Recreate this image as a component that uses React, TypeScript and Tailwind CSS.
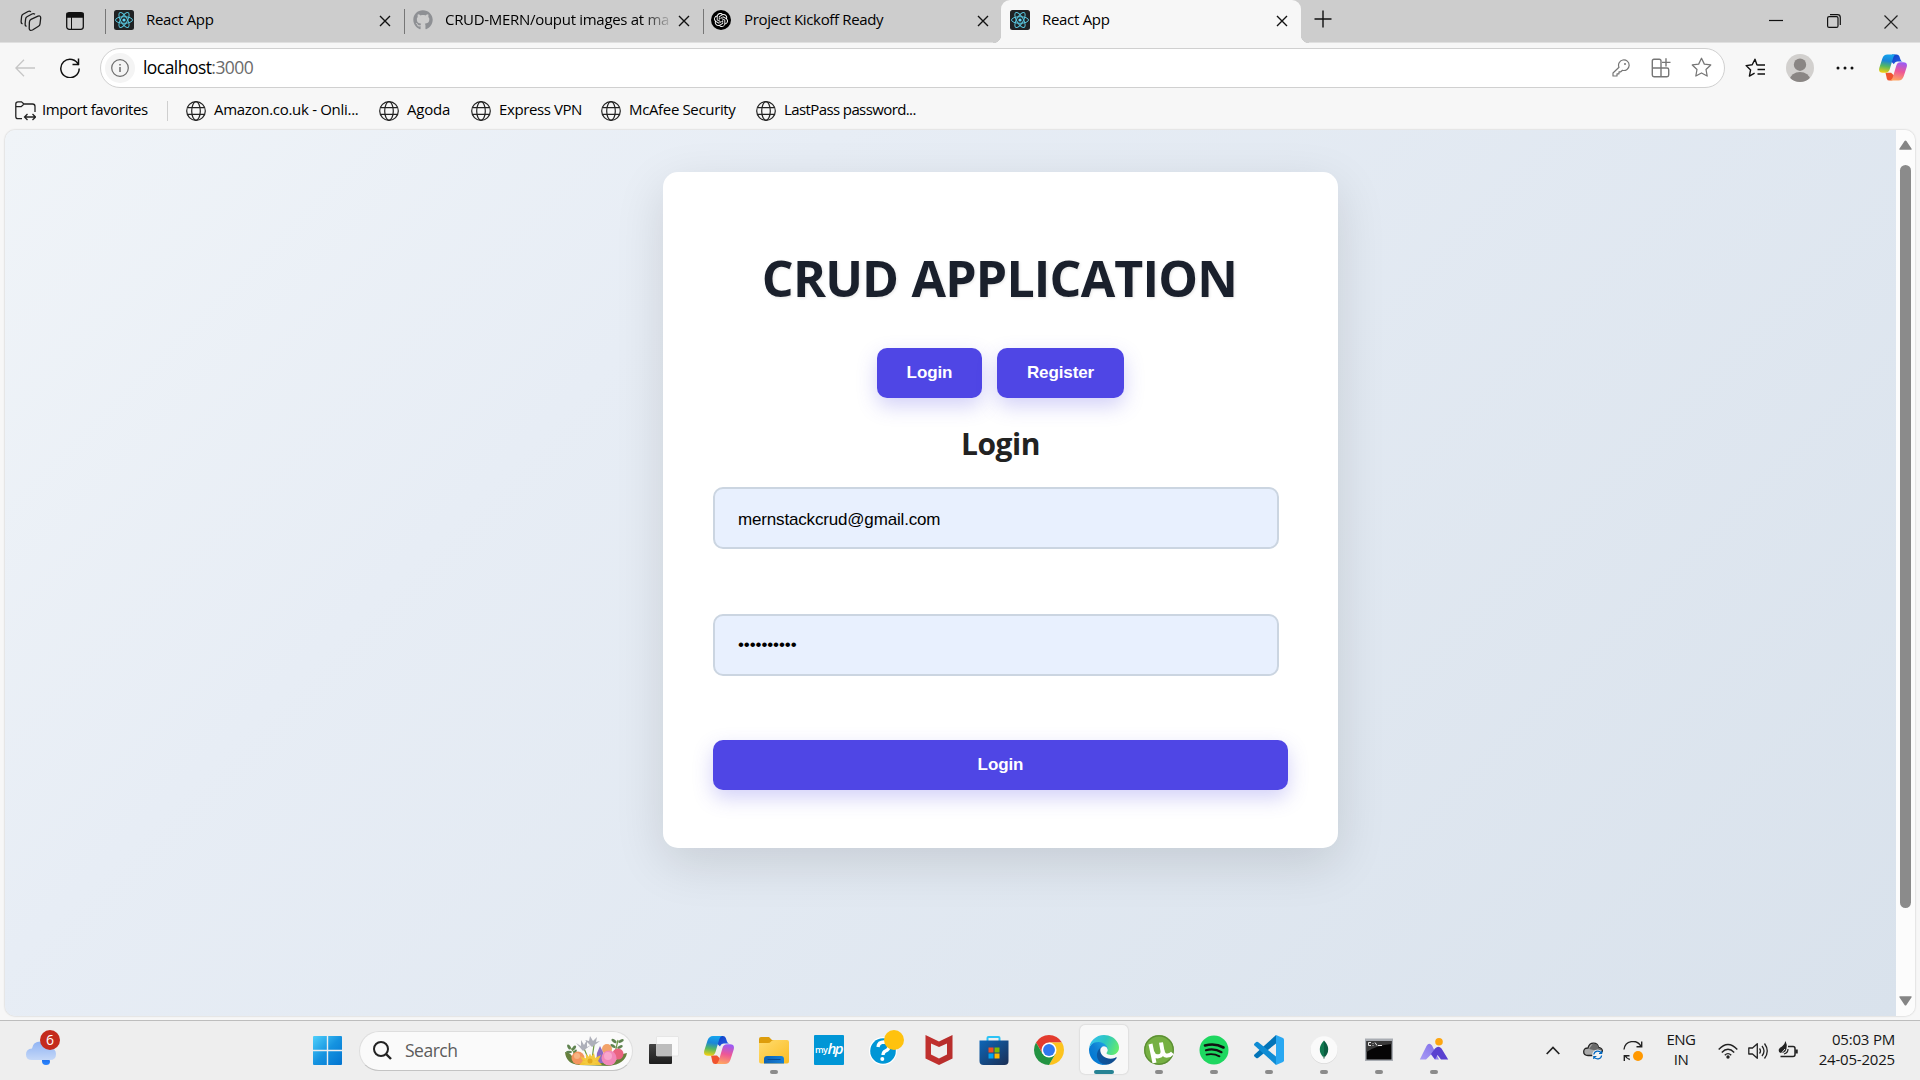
import React from "react";
import { FaGithub } from "react-icons/fa";
import { SiOpenai } from "react-icons/si";

const ui = "font-['Open_Sans','Noto_Sans',sans-serif]";

function ReactFavicon() {
  return (
    <svg viewBox="0 0 20 20" className="size-5 shrink-0">
      <rect width="20" height="20" rx="2.5" fill="#202224" />
      <g fill="none" stroke="#58c4dc" strokeWidth="1">
        <ellipse cx="10" cy="10" rx="8.5" ry="3.3" />
        <ellipse cx="10" cy="10" rx="8.5" ry="3.3" transform="rotate(60 10 10)" />
        <ellipse cx="10" cy="10" rx="8.5" ry="3.3" transform="rotate(120 10 10)" />
      </g>
      <circle cx="10" cy="10" r="1.6" fill="#61dafb" />
    </svg>
  );
}

function CloseIcon() {
  return (
    <svg viewBox="0 0 12 12" className="size-3 shrink-0" fill="none" stroke="#111" strokeWidth="1.4">
      <path d="M1 1l10 10M11 1L1 11" />
    </svg>
  );
}

function Tab({ icon, title, titleClass }: { icon: React.ReactNode; title: string; titleClass: string }) {
  return (
    <div className="flex h-[42px] w-[299px] shrink-0 items-center">
      <div className="mt-px h-[25px] w-px bg-[#767676]" />
      <div className="ml-2 flex w-5 -mt-0.5">{icon}</div>
      <div className={`ml-3 w-[224px] whitespace-nowrap text-[15px] leading-5 -mt-1 ${titleClass}`}>{title}</div>
      <div className="ml-[9px]">
        <CloseIcon />
      </div>
    </div>
  );
}

function TabBar() {
  return (
    <div className="flex h-[43px] items-center border-b border-[#e0e0e0] bg-[#cdcdcd]">
      <svg viewBox="0 0 22 22" className="ml-[20px] size-[22px]" fill="none" stroke="#1c1c1c" strokeWidth="1.3" strokeLinejoin="round">
        <path d="M2.500 14Q.9 13.300 1.100 11.500L1.600 6.500Q1.800 5 3 4.300L8 1.500Q9.500 .8 11 1.800" />
        <path d="M6.500 16.500Q4.900 15.800 5.100 14L5.600 9Q5.800 7.500 7 6.800L12 4Q13.500 3.300 15 4.300" />
        <path d="M11 9.300 18 6.200Q20.800 5.300 20.700 8L20 14Q19.800 15.600 18.500 16.300L12.500 20Q9.500 21.300 9.200 18.500L9.400 12Q9.600 10 11 9.300Z" />
      </svg>
      <svg viewBox="0 0 18 18" className="ml-6 size-[18px]" fill="none" stroke="#111" strokeWidth="1.3">
        <rect x=".7" y=".7" width="16.6" height="16.6" rx="2.5" />
        <path d="M1 1.500h16V5H1z" fill="#111" />
        <path d="M5.500 5v12" strokeWidth="1" />
      </svg>
      <div className="ml-[21px] flex">
        <Tab icon={<ReactFavicon />} title="React App" titleClass="tracking-[-0.3px]" />
        <Tab
          icon={<FaGithub size={20} color="#8e9094" />}
          title="CRUD-MERN/ouput images at ma"
          titleClass="tracking-[-0.3px] [mask-image:linear-gradient(to_right,black_88%,transparent_102%)]"
        />
        <Tab
          icon={
            <div className="flex size-5 -translate-x-px items-center justify-center rounded-full bg-black">
              <SiOpenai size={14} color="#fff" />
            </div>
          }
          title="Project Kickoff Ready"
          titleClass="tracking-[-0.35px]"
        />
      </div>
      <div className="relative -ml-px flex h-[43px] w-[300px] items-center rounded-t-[9px] bg-[#f7f7f7] -mb-px before:absolute before:bottom-0 before:-left-2 before:size-2 before:bg-[radial-gradient(circle_at_0_0,#cdcdcd_8px,#f7f7f7_8.5px)] after:absolute after:bottom-0 after:-right-2 after:size-2 after:bg-[radial-gradient(circle_at_100%_0,#cdcdcd_8px,#f7f7f7_8.5px)]">
        <div className="ml-[9px] -mt-[3px] flex">
          <ReactFavicon />
        </div>
        <div className="ml-3 -mt-[5px] w-[223px] text-[15px] leading-5 tracking-[-0.3px]">React App</div>
        <div className="ml-[11px] flex -mt-px">
          <CloseIcon />
        </div>
      </div>
      <svg viewBox="0 0 18 18" className="ml-[13px] size-[18px] -mt-1" stroke="#111" strokeWidth="1.4">
        <path d="M9 .5v17M.5 9h17" />
      </svg>
      <div className="ml-auto mr-[22px] flex items-center">
        <svg viewBox="0 0 14 14" className="ml-px size-[14px]" stroke="#111" strokeWidth="1.2">
          <path d="M0 6.500h14" />
        </svg>
        <svg viewBox="0 0 14 14" className="ml-[44px] size-[14px]" fill="none" stroke="#111" strokeWidth="1.2">
          <rect x=".6" y="2.600" width="10.400" height="10.800" rx="1.500" />
          <path d="M3 .7h7.500q2.800 0 2.800 2.800V11" />
        </svg>
        <svg viewBox="0 0 14 14" className="ml-[43px] size-[14px] mt-px" stroke="#222" strokeWidth="1.2">
          <path d="M.5.5l13 13M13.500.5l-13 13" />
        </svg>
      </div>
    </div>
  );
}

function CopilotIcon({ id, className }: { id: string; className: string }) {
  return (
    <svg viewBox="0 0 30 28" className={className}>
      <defs>
        <linearGradient id={`${id}a`} x1="0.5" y1="0" x2="0.35" y2="1">
          <stop offset="0" stopColor="#14a4ee" />
          <stop offset=".35" stopColor="#1b86d8" />
          <stop offset=".65" stopColor="#56b860" />
          <stop offset="1" stopColor="#f3cf10" />
        </linearGradient>
        <linearGradient id={`${id}b`} x1=".6" y1="0" x2=".4" y2="1">
          <stop offset="0" stopColor="#9a5af5" />
          <stop offset=".5" stopColor="#ee5796" />
          <stop offset="1" stopColor="#ffa561" />
        </linearGradient>
        <linearGradient id={`${id}c`} x1="0" y1="0" x2="1" y2="1">
          <stop offset="0" stopColor="#0c3fc0" />
          <stop offset="1" stopColor="#2b62ee" />
        </linearGradient>
      </defs>
      <path d="M14 0h5q2 0 2.800 2L23 5.500q.6 2 2.500 2H20q-3 0-4 3l-3-3z" fill={`url(#${id}c)`} />
      <path d="M7 19.500h6l4 4-1.600 3Q14.500 28 13 28h-2q-2 0-2.600-2z" fill="#f0532e" />
      <path d="M9 0h9q-2 .6-2.800 3.500L11.500 16q-1 3.700-4.500 3.700H4Q-1 19.700.3 14.500L3.500 4.500Q5 0 9 0z" fill={`url(#${id}a)`} />
      <path d="M21 28h-9q2-.6 2.800-3.500L18.500 12q1-3.700 4.500-3.700h3q5 0 3.700 5.200L26.500 23.500Q25 28 21 28z" fill={`url(#${id}b)`} />
    </svg>
  );
}

const starPath = "M10 1.200l2.700 5.600 6.100.8-4.500 4.300 1.100 6.200L10 15.200l-5.400 2.900 1.100-6.200L1.200 7.600l6.100-.8z";

function Toolbar() {
  return (
    <div className="flex h-[49px] items-center bg-[#f7f7f7]">
      <svg viewBox="0 0 20 18" className="ml-[15px] h-[18px] w-5" fill="none" stroke="#c6c6c6" strokeWidth="1.300">
        <path d="M20 9H1M9 .8.9 9 9 17.200" />
      </svg>
      <svg viewBox="0 0 20 20" className="ml-[25px] size-5" fill="none" stroke="#111" strokeWidth="1.500">
        <path d="M18.600 7.200A9.200 9.200 0 1 0 19.200 10.500M18.500.5v6h-6" />
      </svg>
      <div className="ml-5 flex h-[40px] w-[1625px] items-center rounded-full border border-[#d0d0d0] bg-white">
        <div className="ml-1 flex size-[30px] items-center justify-center rounded-full bg-[#f4f4f4]">
          <svg viewBox="0 0 18 18" className="size-[18px]" fill="none" stroke="#6b6b6b" strokeWidth="1.200">
            <circle cx="9" cy="9" r="8.300" />
            <path d="M9 8v5M9 5v1.500" strokeWidth="1.500" />
          </svg>
        </div>
        <div className="ml-[8px] -mt-0.5 text-[17.5px] leading-6 tracking-[-0.55px] text-black">
          localhost<span className="text-[#6b6b6b]">:3000</span>
        </div>
        <div className="ml-auto mr-[12px] flex items-center text-[#767676]">
          <svg viewBox="0 0 18 18" className="size-[18px]" fill="none" stroke="currentColor" strokeWidth="1.200">
            <path d="M7 8.300A5.300 5.300 0 1 1 10.500 11.300L8.800 12.800H7v2H5V17H1v-3z" strokeLinejoin="round" />
            <circle cx="13" cy="5" r="1" fill="currentColor" stroke="none" />
          </svg>
          <svg viewBox="0 0 20 20" className="ml-[21px] size-5" fill="none" stroke="currentColor" strokeWidth="1.400">
            <path d="M10 10V3q0-1.700-1.700-1.700H3Q1.300 1.300 1.300 3v14q0 1.700 1.700 1.700h13q1.700 0 1.700-1.700v-5.300Q17.700 10 16 10H1.300M10 10v8.700M15 .3v8.200M11 4.400h8.500" />
          </svg>
          <svg viewBox="0 0 20 20" className="ml-5 size-[21px]" fill="none" stroke="currentColor" strokeWidth="1.200" strokeLinejoin="round">
            <path d={starPath} />
          </svg>
        </div>
      </div>
      <svg viewBox="0 0 20 20" className="ml-5 size-5" fill="none" stroke="#111" strokeWidth="1.400" strokeLinejoin="round">
        <path d="M12.800 7l-.9-.200L10 1.200 7.200 6.800l-6.100.8 4.500 4.300-1.200 6.200 5.200-2.900M12.500 7H20M12.500 11.500H20M12.500 16H20" />
      </svg>
      <svg viewBox="0 0 28 28" className="ml-[21px] size-7">
        <clipPath id="avatar">
          <circle cx="14" cy="14" r="14" />
        </clipPath>
        <g clipPath="url(#avatar)">
          <path d="M0 0h28v28H0z" fill="#d2d0ce" />
          <circle cx="14" cy="10.700" r="6.200" fill="#8a8684" />
          <ellipse cx="14" cy="25.500" rx="10" ry="7.500" fill="#8a8684" />
        </g>
      </svg>
      <svg viewBox="0 0 18 4" className="ml-[22px] h-1 w-[18px]" fill="#111">
        <circle cx="2" cy="2" r="1.500" />
        <circle cx="9" cy="2" r="1.500" />
        <circle cx="16" cy="2" r="1.500" />
      </svg>
      <CopilotIcon id="top" className="ml-[25px] h-[27px] w-7" />
    </div>
  );
}

function GlobeIcon() {
  return (
    <svg viewBox="0 0 20 20" className="size-5 shrink-0" fill="none" stroke="#222" strokeWidth="1.200">
      <circle cx="10" cy="10" r="9.300" />
      <ellipse cx="10" cy="10" rx="4.300" ry="9.300" />
      <path d="M1.500 6.700h17M1.500 13.300h17" />
    </svg>
  );
}

const favorites = [
  { label: "Amazon.co.uk - Onli...", box: "w-[193px] tracking-[-0.3px]" },
  { label: "Agoda", box: "w-[92px] tracking-[-0.2px]" },
  { label: "Express VPN", box: "w-[130px] tracking-[-0.4px]" },
  { label: "McAfee Security", box: "w-[155px] tracking-[-0.35px]" },
  { label: "LastPass password...", box: "w-[180px] tracking-[-0.6px]" },
];

function FavoritesBar() {
  return (
    <div className="flex h-[38px] items-center bg-[#f7f7f7] pb-px text-[15px] text-black">
      <svg viewBox="0 0 21 20" className="ml-[15px] h-5 w-[21px]" fill="none" stroke="#222" strokeWidth="1.300">
        <path d="M7 17.700H3Q.8 17.700.8 15.500V3Q.8.800 3 .800h3.500L9 3h8.500Q20 3 20 5.500V11M.8 5.700h5.400L9 3M10 16h10M12.500 13l-3 3 3 3M17.500 13l3 3-3 3" />
      </svg>
      <div className="-mt-0.5 ml-[6px] w-[125px] tracking-[-0.42px] whitespace-nowrap">Import favorites</div>
      <div className="h-5 w-px bg-[#cfcfcf]" />
      <div className="ml-[18px] flex">
        {favorites.map((f) => (
          <div key={f.label} className={`flex shrink-0 items-center gap-[8px] whitespace-nowrap ${f.box}`}>
            <GlobeIcon />
            <span className="-mt-0.5">{f.label}</span>
          </div>
        ))}
      </div>
    </div>
  );
}

const button =
  "flex h-[50px] items-center justify-center rounded-[10px] bg-[#4f46e5] pb-px text-[17px] leading-[17px] font-bold tracking-[-0.1px] text-white shadow-[0_8px_20px_rgba(79,70,229,0.25)]";
const field =
  "block h-[62px] w-[566px] rounded-[10px] border-2 border-[#cbd5e1] bg-[#e8f0fe] px-[23px] text-[17px] text-black";

function Page() {
  return (
    <div className="flex h-[886px] overflow-hidden rounded-[10px] shadow-[0_0_2px_rgba(0,0,0,0.25)]">
      <main className="w-[1891px] bg-[linear-gradient(135deg,#f0f4f8,#e7edf5_30%,#d9e2ec)] pt-[42px] pl-[658px]">
        <div className="h-[676px] w-[675px] rounded-[15px] bg-white px-[50px] pt-[73px] font-['Liberation_Sans',Arial,sans-serif] shadow-[0_15px_50px_rgba(0,0,0,0.12)]">
          <h1 className={`${ui} -ml-0.5 text-center text-[50px] leading-[66px] font-bold tracking-[-0.8px] whitespace-nowrap text-[#1a202c] [text-shadow:1px_1px_3px_rgba(0,0,0,0.1)] [word-spacing:1px]`}>
            CRUD APPLICATION
          </h1>
          <div className="mt-[37px] flex justify-center gap-[15px]">
            <button className={`${button} w-[105px]`}>Login</button>
            <button className={`${button} w-[127px]`}>Register</button>
          </div>
          <h2 className={`${ui} mt-[26px] text-center text-[30px] leading-10 font-bold tracking-[-0.5px] text-[#222]`}>Login</h2>
          <input className={`${field} mt-[23px] pt-[3px] tracking-[-0.17px]`} readOnly value="mernstackcrud@gmail.com" />
          <input className={`${field} mt-[65px] tracking-[-0.1px]`} readOnly type="password" value="0123456789" />
          <button className={`${button} mt-16 w-[575px]`}>Login</button>
        </div>
      </main>
      <div className="flex w-[19px] flex-col items-center bg-[#fcfcfc]">
        <svg viewBox="0 0 14 10" className="mt-[10px] h-[10px] w-[13px]" fill="#858585">
          <path d="M1 10Q-.3 10 .6 8.700L6 .8q1-1.200 2 0l5.400 7.900Q14.300 10 13 10z" />
        </svg>
        <div className="mt-[15px] h-[743px] w-[11px] rounded-full bg-[#8b8b8b]" />
        <svg viewBox="0 0 14 10" className="mt-[88px] h-[10px] w-[13px] rotate-180" fill="#858585">
          <path d="M1 10Q-.3 10 .6 8.700L6 .8q1-1.200 2 0l5.400 7.900Q14.300 10 13 10z" />
        </svg>
      </div>
    </div>
  );
}

function Flowers() {
  const petals = [0, 30, 60, 90, 120, 150];
  return (
    <svg viewBox="0 0 62 30" className="h-[30px] w-[62px]">
      <path d="M0 16q1 12 14 13l30 1q16-2 18-13-7 1-11 7l-20 4-22-4Q6 16 0 16z" fill="#66803c" />
      <g fill="none" stroke="#6f9a45" strokeWidth="1.200">
        <path d="M18 10l5 12M29 9l-2 14M4 10l8 10M53 4l-3 13" />
      </g>
      <g fill="#5f8350">
        <ellipse cx="4" cy="11" rx="1.500" ry="2.800" transform="rotate(-30 4 11)" />
        <ellipse cx="9" cy="12" rx="1.500" ry="2.800" transform="rotate(40 9 12)" />
        <ellipse cx="4" cy="16" rx="3" ry="1.300" />
        <ellipse cx="10" cy="16" rx="1.300" ry="2.800" transform="rotate(30 10 16)" />
        <ellipse cx="49" cy="5" rx="3" ry="1.500" transform="rotate(35 49 5)" />
        <ellipse cx="56" cy="5" rx="3" ry="1.500" transform="rotate(-25 56 5)" />
        <ellipse cx="48" cy="10" rx="3" ry="1.500" transform="rotate(30 48 10)" />
        <ellipse cx="55" cy="11" rx="3" ry="1.500" transform="rotate(-25 55 11)" />
      </g>
      <g fill="#aeb0ba">
        <path d="M18 15l-7-8 5 3 0-6 3 5 3-5 0 7 4-2z" />
        <path d="M27 11l-7-7 4 1 1-5 3 5 4-4-1 5 4-1z" />
      </g>
      <circle cx="42" cy="13" r="5" fill="#f2a268" />
      <circle cx="13" cy="22" r="6.500" fill="#f3955f" />
      <circle cx="12" cy="20" r="3" fill="#f7b483" />
      <path d="M35 10l3 6 2 11H31l1-10z" fill="#8c6cc0" />
      <circle cx="53" cy="18" r="5.500" fill="#ea6480" />
      <circle cx="44" cy="22" r="7.500" fill="#f287b8" />
      <circle cx="43" cy="20" r="4" fill="#f8a6cc" />
      <path d="M15 20l6 3 0-5 4 4 4-5 1 5 6-3-3 6 4 4H14l4-4z" fill="#f1c436" />
      <clipPath id="bed">
        <path d="M0 0h62v29H0z" />
      </clipPath>
      <g fill="#f4ca40" clipPath="url(#bed)">
        {petals.map((a) => (
          <ellipse key={a} cx="25" cy="26" rx="8" ry="1.500" transform={`rotate(${a} 25 26)`} />
        ))}
        <circle cx="25" cy="25" r="2.500" fill="#e3a91e" />
      </g>
    </svg>
  );
}

function EdgeIcon() {
  return (
    <svg viewBox="0 0 256 256" className="size-[30px]">
      <defs>
        <linearGradient id="e1" x1="0" y1=".7" x2="1" y2=".7">
          <stop offset="0" stopColor="#0c59a4" />
          <stop offset="1" stopColor="#114a8b" />
        </linearGradient>
        <linearGradient id="e2" x1=".9" y1=".3" x2=".2" y2=".9">
          <stop offset="0" stopColor="#1b9de2" />
          <stop offset=".5" stopColor="#0f7fd3" />
          <stop offset="1" stopColor="#0078d4" />
        </linearGradient>
        <linearGradient id="e3" x1="0" y1=".3" x2="1" y2=".6">
          <stop offset="0" stopColor="#35c1f1" />
          <stop offset=".5" stopColor="#2cc7c0" />
          <stop offset="1" stopColor="#66eb6e" />
        </linearGradient>
      </defs>
      <g transform="translate(-4.630 -4.920)">
        <path fill="url(#e1)" d="M235.680 195.460a93.730 93.730 0 0 1-10.540 4.710 101.870 101.870 0 0 1-35.900 6.460c-47.320 0-88.540-32.550-88.540-74.320A31.480 31.480 0 0 1 117.130 105c-42.800 1.800-53.800 46.400-53.800 72.530 0 73.880 68.090 81.370 82.760 81.370 7.910 0 19.840-2.300 27-4.560l1.310-.440a128.340 128.340 0 0 0 66.600-52.800 4 4 0 0 0-5.320-5.640z" />
        <path fill="url(#e2)" d="M110.340 246.340A79.200 79.200 0 0 1 87.600 225a80.720 80.720 0 0 1 29.530-120c3.120-1.470 8.450-4.130 15.540-4a32.350 32.350 0 0 1 25.690 13 31.880 31.880 0 0 1 6.360 18.660c0-.210 24.460-79.600-80-79.600-43.900 0-80 41.660-80 78.210a130.150 130.150 0 0 0 12.110 56 128 128 0 0 0 156.380 67.110 75.550 75.550 0 0 1-62.780-8z" />
        <path fill="url(#e3)" d="M156.940 153.780c-.810 1.050-3.300 2.500-3.300 5.660 0 2.610 1.700 5.120 4.720 7.230 14.380 10 41.490 8.680 41.560 8.680a59.560 59.560 0 0 0 30.270-8.350 61.380 61.380 0 0 0 30.430-52.880c.260-22.410-8-37.310-11.340-43.910C228.090 28.760 182.350 4.920 132.610 4.920A128 128 0 0 0 4.630 131.080c.480-36.540 36.800-66.050 80-66.050 3.500 0 23.460.340 42 10.070 16.340 8.580 24.900 18.940 30.850 29.210 6.180 10.670 7.280 24.150 7.280 29.520 0 5.370-2.740 13.330-7.820 19.950z" />
      </g>
    </svg>
  );
}

const i30 = "size-[30px]";

const apps: { name: string; icon: React.ReactNode; state?: "open" | "active" }[] = [
  {
    name: "taskview",
    icon: (
      <svg viewBox="0 0 30 30" className={i30}>
        <defs>
          <linearGradient id="tv" x1="0" y1="0" x2="0" y2="1">
            <stop offset="0" stopColor="#444" />
            <stop offset="1" stopColor="#1d1d1d" />
          </linearGradient>
        </defs>
        <rect x="0" y="9" width="23" height="20" rx="1" fill="url(#tv)" />
        <rect x="7.500" y="1.500" width="22" height="19.500" rx="1" fill="#fafafa" fillOpacity=".95" stroke="#dcdcdc" strokeWidth=".6" />
        <path d="M7.500 9H23v12H7.500z" fill="#bdbdbd" />
      </svg>
    ),
  },
  { name: "copilot", icon: <CopilotIcon id="task" className="h-7 w-[30px]" /> },
  {
    name: "files",
    state: "open",
    icon: (
      <svg viewBox="0 0 30 30" className={i30}>
        <defs>
          <linearGradient id="fo" x1="0" y1="0" x2="1" y2="1">
            <stop offset="0" stopColor="#ffdc70" />
            <stop offset="1" stopColor="#fbbc22" />
          </linearGradient>
          <linearGradient id="fb" x1="0" y1="0" x2="1" y2="0">
            <stop offset="0" stopColor="#0d62b4" />
            <stop offset="1" stopColor="#1680d8" />
          </linearGradient>
        </defs>
        <path d="M0 4q0-2 2-2h8l3 3h8v8H0z" fill="#dd9d0c" />
        <path d="M0 8h9q2 0 3-1.500Q13 5 15 5h13q2 0 2 2v19.500q0 2-2 2H2q-2 0-2-2z" fill="url(#fo)" />
        <path d="M5 28.500V24q0-3 3-3h14q3 0 3 3v4.500z" fill="url(#fb)" />
        <path d="M9 24.500h12" stroke="#0b4c91" strokeWidth="1.200" strokeLinecap="round" />
      </svg>
    ),
  },
  {
    name: "myhp",
    icon: (
      <div className="flex size-[30px] items-center justify-center rounded-[1px] bg-[#0096d6] font-['Open_Sans',sans-serif] text-white">
        <span className="text-[9px] font-semibold tracking-[-0.5px]">my</span>
        <span className="-mt-0.5 text-[15px] font-semibold tracking-[-1.500px] italic">hp</span>
      </div>
    ),
  },
  {
    name: "help",
    icon: (
      <svg viewBox="0 0 36 36" className="mb-[5px] ml-[6px] size-9 shrink-0">
        <circle cx="14" cy="22" r="14" fill="#fff" />
        <circle cx="14" cy="22" r="12.800" fill="#0096d6" />
        <path d="M9 18q.5-5 6-5 5 .3 5 4.500 0 3-3.500 4.500-2.300 1-2.500 4" fill="none" stroke="#fff" strokeWidth="3.300" />
        <circle cx="13.300" cy="30" r="2" fill="#fff" />
        <circle cx="25" cy="11" r="10" fill="#ffc20e" />
      </svg>
    ),
  },
  {
    name: "mcafee",
    icon: (
      <svg viewBox="0 0 30 30" className={i30}>
        <path d="M1.500 0 15 6.500 28.500 0v23.500L15 30 1.500 23.500z" fill="#c0302e" />
        <path d="M7 8.500 15 12l8-3.500v11L15 23.500 7 19.500z" fill="#eeeeee" />
        <path d="M15 6.500V12l8-3.500V19.500L15 23.500V30l13.500-6.500V0z" fill="#000" fillOpacity=".04" />
      </svg>
    ),
  },
  {
    name: "store",
    icon: (
      <svg viewBox="0 0 30 30" className={i30}>
        <defs>
          <linearGradient id="st" x1="0" y1="0" x2="1" y2="1">
            <stop offset="0" stopColor="#0d66b8" />
            <stop offset="1" stopColor="#1b2f55" />
          </linearGradient>
        </defs>
        <path d="M8.500 7V3q0-1 1-1h10q1 0 1 1v4" fill="none" stroke="#2cc3f5" strokeWidth="2" />
        <path d="M.5 5.500h29V26q0 4-4 4h-21q-4 0-4-4z" fill="url(#st)" />
        <path d="M9.500 12.500h5v5h-5z" fill="#f25022" />
        <path d="M15.500 12.500h5v5h-5z" fill="#7fba00" />
        <path d="M9.500 18.500h5v5h-5z" fill="#00a4ef" />
        <path d="M15.500 18.500h5v5h-5z" fill="#ffb900" />
      </svg>
    ),
  },
  {
    name: "chrome",
    icon: (
      <svg viewBox="2 2 44 44" className={i30}>
        <path d="M4.950 13A22 22 0 0 1 43.050 13H24L14.470 29.500z" fill="#e33b2e" />
        <path d="M43.050 13A22 22 0 0 1 24 46L33.530 29.500 24 13z" fill="#fcc31e" />
        <path d="M24 46A22 22 0 0 1 4.950 13L14.470 29.500h19.060z" fill="#229342" />
        <circle cx="24" cy="24" r="11" fill="#fff" />
        <circle cx="24" cy="24" r="8.700" fill="#3078ee" />
      </svg>
    ),
  },
  { name: "edge", state: "active", icon: <EdgeIcon /> },
  {
    name: "utorrent",
    state: "open",
    icon: (
      <svg viewBox="0 0 30 30" className={i30}>
        <circle cx="15" cy="15" r="15" fill="#76b043" />
        <circle cx="15" cy="15" r="14.200" fill="none" stroke="#5b8d35" strokeWidth="1.200" />
        <path d="M6.500 9 10.500 28M8.500 17q1.500 5 6 4.300 5-.8 3.800-6.500L17 7.500M18.500 15q.8 6 5 5.600 3-.300 5-2.600" fill="none" stroke="#fff" strokeWidth="4" />
      </svg>
    ),
  },
  {
    name: "spotify",
    state: "open",
    icon: (
      <svg viewBox="0 0 30 30" className={i30}>
        <circle cx="15" cy="15" r="14.500" fill="#1ed760" />
        <g fill="none" stroke="#111" strokeLinecap="round">
          <path d="M6 10.500q10-2.800 18.500 2" strokeWidth="2.600" />
          <path d="M7 15.200q8.500-2.300 15.500 2" strokeWidth="2.200" />
          <path d="M7.500 19.600q7-1.700 13 1.800" strokeWidth="1.800" />
        </g>
      </svg>
    ),
  },
  {
    name: "vscode",
    state: "open",
    icon: (
      <svg viewBox="0 0 30 30" className={i30}>
        <path d="M.5 19.500 22 0v8.500L4 23q-1 .6-1.800 0L.5 21.500q-1-1 0-2z" fill="#0274b8" />
        <path d="M.5 10.500 22 30v-8.500L4 7q-1-.6-1.800 0L.5 8.500q-1 1 0 2z" fill="#0f8cd4" />
        <path d="M22 0l7 3q1 .5 1 1.700v20.600q0 1.200-1 1.700l-7 3z" fill="#29a8f2" />
      </svg>
    ),
  },
  {
    name: "mongodb",
    state: "open",
    icon: (
      <svg viewBox="0 0 30 30" className={i30}>
        <circle cx="15" cy="15.500" r="13.500" fill="#d8d8d8" />
        <circle cx="15" cy="14.700" r="13.500" fill="#fafafa" />
        <path d="M15 5.500q-8.500 9 0 17.500z" fill="#10774f" />
        <path d="M15 5.500q8.500 9 0 17.500z" fill="#0b5c40" />
        <path d="M15 21v3" stroke="#7b9b8d" />
      </svg>
    ),
  },
  {
    name: "terminal",
    state: "open",
    icon: (
      <svg viewBox="0 0 30 30" className={i30}>
        <rect x="1" y="3.500" width="28" height="22.500" fill="#a9adb3" />
        <path d="M2.500 6h25v18.500h-25z" fill="#050505" />
        <path d="M2.500 6h25v3Q13 10 2.500 17z" fill="#3a3a3a" />
        <path d="M7 7.500H4.500v3H7M9 8v.8M9 10v.8M11 7.500l2 3M14 10.500h4" fill="none" stroke="#e8e8e8" strokeWidth="1" />
      </svg>
    ),
  },
  {
    name: "mountains",
    state: "open",
    icon: (
      <svg viewBox="0 0 30 30" className={i30}>
        <defs>
          <linearGradient id="m1" x1="0" y1="1" x2="1" y2="0">
            <stop offset="0" stopColor="#a99cf5" />
            <stop offset="1" stopColor="#7d6be8" />
          </linearGradient>
        </defs>
        <path d="M.8 24.500 7.500 11q2.500-4 5.500-.5l7 14h-4l-4-5-5 5z" fill="url(#m1)" />
        <path d="M12 19 16 13.500q3.500-3.500 6.500 0L29.200 24.500H22L18.500 20 16 24.500z" fill="#5a41d0" />
        <circle cx="20" cy="6.800" r="3.800" fill="#fda612" />
      </svg>
    ),
  },
];

function Taskbar() {
  return (
    <div className="flex h-[60px] items-center border-t border-[#bdbdbd] bg-[#eeeeee]">
      <svg viewBox="0 0 34 32" className="mb-2 ml-[26px] h-8 w-[34px] -translate-y-px">
        <defs>
          <linearGradient id="cl" x1="0" y1="0" x2="0" y2="1">
            <stop offset="0" stopColor="#8fb3f3" />
            <stop offset="1" stopColor="#c5d8f8" />
          </linearGradient>
          <linearGradient id="dr" x1="0" y1="0" x2="0" y2="1">
            <stop offset="0" stopColor="#0f57d6" />
            <stop offset="1" stopColor="#2c86ff" />
          </linearGradient>
        </defs>
        <path d="M6 30Q0 30 0 24.500 0 19 6 18.500 7 11.500 14.500 11.500 21.500 12 23 18q7 0 7 6t-6 6z" fill="url(#cl)" />
        <path d="M17 24q-1 4-1 8" fill="none" />
        <circle cx="24" cy="10" r="10" fill="#c42b1c" />
        <text x="24" y="15" textAnchor="middle" fontSize="14" fill="#fff" fontFamily="Open Sans">
          6
        </text>
      </svg>
      <svg viewBox="0 0 8 12" className="-ml-[18px] mt-[17px] h-3 w-2">
        <path d="M0 0q8 4 8 8.500 0 3.500-4 3.500-4 0-4-4z" fill="url(#dr)" />
      </svg>
      <svg viewBox="0 0 29 29" className="ml-[263px] size-[29px]">
        <defs>
          <linearGradient id="win" gradientUnits="userSpaceOnUse" x1="0" y1="0" x2="29" y2="29">
            <stop offset="0" stopColor="#4fd0fb" />
            <stop offset=".5" stopColor="#1593e0" />
            <stop offset="1" stopColor="#0273cf" />
          </linearGradient>
        </defs>
        <path d="M1 0h12.800v13.800H0V1q0-1 1-1zM15.200 0H28q1 0 1 1v12.800H15.200zM0 15.200h13.800V29H1q-1 0-1-1zM15.200 15.200H29V28q0 1-1 1H15.200z" fill="url(#win)" />
      </svg>
      <div className="ml-[17px] flex h-10 w-[274px] items-center rounded-full border border-[#dedede] border-b-[#c4c4c4] bg-[#fafafa]">
        <svg viewBox="0 0 19 19" className="ml-[13px] size-[19px]" fill="none" stroke="#222" strokeWidth="2">
          <circle cx="8" cy="8" r="7" />
          <path d="M13 13l5 5" strokeWidth="2.400" />
        </svg>
        <div className="ml-[13px] text-[17.5px] tracking-[-0.5px] text-[#5c5c5c]">Search</div>
        <div className="mr-[5px] ml-auto">
          <Flowers />
        </div>
      </div>
      <div className="ml-[3px] flex">
        {apps.map((a) => (
          <div key={a.name} className="flex w-[55px] justify-center">
            <div
              className={
                a.state === "active"
                  ? "flex h-[49px] w-12 flex-col items-center rounded-[5px] bg-[#f8f8f8] shadow-[0_0_2px_rgba(0,0,0,0.2)] -translate-y-px"
                  : "flex h-[49px] w-12 flex-col items-center -translate-y-px"
              }
            >
              <div className="flex h-[49px] items-center justify-center -mb-1">{a.icon}</div>
              {a.state === "active" && <div className="h-1 w-5 shrink-0 rounded-full bg-[#278394]" />}
              {a.state === "open" && <div className="h-1 w-2 shrink-0 rounded-full bg-[#8a8a8a]" />}
            </div>
          </div>
        ))}
      </div>
      <div className="mr-[25px] ml-auto flex items-center text-[15px] leading-5 text-[#161616]">
        <svg viewBox="0 0 14 9" className="h-[9px] w-[14px]" fill="none" stroke="#222" strokeWidth="1.700">
          <path d="M.7 8 7 1.500 13.300 8" />
        </svg>
        <svg viewBox="0 0 20 18" className="ml-[23px] h-[18px] w-5">
          <path d="M5 13.500Q.7 13.500.7 9.700T5 6Q6.200 1.200 10.500 1.200T15.500 5.500Q19.500 6 19.500 10V13.500z" fill="#aaa" stroke="#222" strokeWidth="1.300" />
          <path d="M10 1.500q5 0 5.500 4.300 3.500.4 3.700 4.200L6 7z" fill="#6a6a6a" />
          <circle cx="14.700" cy="13" r="5.500" fill="#f2f2f2" />
          <path d="M10.800 12.500a4 4 0 0 1 7.500-1.300M18.600 8.900v2.600H16M18.600 13.500a4 4 0 0 1-7.500 1.300M10.800 17.100v-2.600h2.600" fill="none" stroke="#0067c0" strokeWidth="1.200" />
        </svg>
        <svg viewBox="0 0 20 20" className="ml-5 size-5" fill="none" stroke="#222" strokeWidth="1.400">
          <path d="M1 8.500A9 9 0 0 1 18 5.500M18.700.5v5.200h-5.200M1.300 20v-5.200h5.200M1.800 14.500a9 9 0 0 0 5 4" />
          <circle cx="15" cy="15" r="5" fill="#ff9800" stroke="none" />
        </svg>
        <div className="-mt-[3px] ml-[23px] w-[30px] text-center tracking-[-0.5px]">
          <div>ENG</div>
          <div>IN</div>
        </div>
        <svg viewBox="0 0 20 16" className="ml-[22px] h-4 w-5" fill="none" stroke="#222" strokeWidth="1.400">
          <path d="M.7 6.500Q10-3.500 19.300 6.500M3.800 9.500Q10 3 16.200 9.500M6.800 12.300q3.200-3.300 6.400 0" />
          <circle cx="10" cy="14" r="1.700" fill="#222" stroke="none" />
        </svg>
        <svg viewBox="0 0 20 18" className="ml-[10px] h-[18px] w-5" fill="none" stroke="#222" strokeWidth="1.300">
          <path d="M.8 6h3.700L9.300 1.700v14.600L4.500 12H.8zM11.500 6.500q2 2.500 0 5M14 4q4 5 0 10M16.500 1.500q5.500 7.500 0 15" strokeLinejoin="round" />
        </svg>
        <svg viewBox="0 0 20 18" className="ml-[10px] h-[18px] w-5 -translate-y-px" fill="none" stroke="#222" strokeWidth="1.500">
          <path d="M10 5.500H15q2 0 2 2v6q0 2-2 2H2.500" />
          <path d="M18.500 8.500v4" strokeWidth="2.500" />
          <path d="M7.500 0Q9.500 4 8.500 7.500 8 11 4.500 12 .5 12.500.7 9 1 6.500 4 5.500 6.500 4 7.500 0z" fill="#222" stroke="none" />
          <path d="M6 13q4-1 4-5" strokeWidth="1.200" />
          <path d="M1 15l6-7" stroke="#eee" strokeWidth="1" />
        </svg>
        <div className="-mt-1 ml-[17px] w-[80px] text-right tracking-[-0.2px] whitespace-nowrap">
          <div>05:03 PM</div>
          <div>24-05-2025</div>
        </div>
      </div>
    </div>
  );
}

export default function App() {
  return (
    <div className={`flex h-[1080px] w-[1920px] flex-col overflow-hidden bg-[#f7f7f7] ${ui}`}>
      <TabBar />
      <Toolbar />
      <FavoritesBar />
      <div className="h-[890px] px-[5px]">
        <Page />
      </div>
      <Taskbar />
    </div>
  );
}
